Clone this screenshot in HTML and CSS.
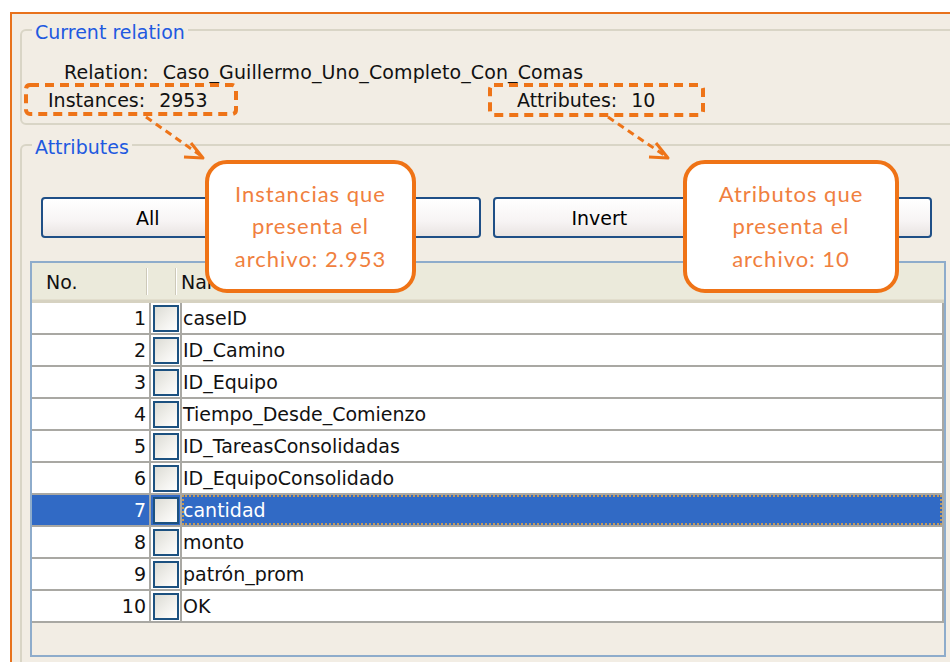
FILE: index.html
```html
<!DOCTYPE html>
<html lang="en">
<head>
<meta charset="utf-8">
<title>Preprocess - Current relation</title>
<link rel="stylesheet" href="styles.css">
</head>
<body>
<div class="frame">
  <fieldset class="group relation">
    <legend>Current relation</legend>
    <div class="rel-line"><span class="lbl">Relation:</span>Caso_Guillermo_Uno_Completo_Con_Comas</div>
    <div class="stats">
      <span class="inst"><span class="lbl">Instances:</span>2953</span>
      <span class="attrs"><span class="lbl">Attributes:</span>10</span>
    </div>
  </fieldset>

  <fieldset class="group attributes">
    <legend>Attributes</legend>
    <div class="buttons">
      <button class="btn">All</button>
      <button class="btn">None</button>
      <button class="btn">Invert</button>
      <button class="btn">Pattern</button>
    </div>
    <div class="table">
      <div class="thead">
        <div class="h-no">No.</div>
        <div class="h-chk"></div>
        <div class="h-name">Name</div>
      </div>
      <div class="tbody">
        <div class="row"><div class="c-no">1</div><div class="c-chk"><span class="box"></span></div><div class="c-name">caseID</div></div>
        <div class="row"><div class="c-no">2</div><div class="c-chk"><span class="box"></span></div><div class="c-name">ID_Camino</div></div>
        <div class="row"><div class="c-no">3</div><div class="c-chk"><span class="box"></span></div><div class="c-name">ID_Equipo</div></div>
        <div class="row"><div class="c-no">4</div><div class="c-chk"><span class="box"></span></div><div class="c-name">Tiempo_Desde_Comienzo</div></div>
        <div class="row"><div class="c-no">5</div><div class="c-chk"><span class="box"></span></div><div class="c-name">ID_TareasConsolidadas</div></div>
        <div class="row"><div class="c-no">6</div><div class="c-chk"><span class="box"></span></div><div class="c-name">ID_EquipoConsolidado</div></div>
        <div class="row sel"><div class="c-no">7</div><div class="c-chk"><span class="box"></span></div><div class="c-name">cantidad</div></div>
        <div class="row"><div class="c-no">8</div><div class="c-chk"><span class="box"></span></div><div class="c-name">monto</div></div>
        <div class="row"><div class="c-no">9</div><div class="c-chk"><span class="box"></span></div><div class="c-name">patrón_prom</div></div>
        <div class="row"><div class="c-no">10</div><div class="c-chk"><span class="box"></span></div><div class="c-name">OK</div></div>
      </div>
    </div>
  </fieldset>
</div>

<div class="callout callout-inst">
  <span>Instancias que</span>
  <span>presenta el</span>
  <span>archivo: 2.953</span>
</div>
<div class="callout callout-attr">
  <span>Atributos que</span>
  <span>presenta el</span>
  <span>archivo: 10</span>
</div>

<svg class="marks" width="950" height="662" viewBox="0 0 950 662" aria-hidden="true">
  <g fill="none" stroke="#ee7418" stroke-linecap="butt" stroke-linejoin="round">
    <rect x="26" y="85" width="210" height="29" rx="4" stroke-width="4" stroke-dasharray="9 6"/>
    <rect x="490" y="85" width="213" height="30" rx="4" stroke-width="4" stroke-dasharray="9 6"/>
    <path d="M146 117 L200 155" stroke-width="3" stroke-dasharray="7 5"/>
    <polyline points="191,143 203,158 184,157" stroke-width="3"/>
    <path d="M608 117 L664 155" stroke-width="3" stroke-dasharray="7 5"/>
    <polyline points="656,143 668,158 649,157" stroke-width="3"/>
  </g>
</svg>
</body>
</html>
```

FILE: styles.css
```css
html, body {
  margin: 0;
  padding: 0;
  background: #ffffff;
  overflow: hidden;
}

body {
  width: 950px;
  height: 662px;
  position: relative;
  font-family: "DejaVu Sans", "Liberation Sans", sans-serif;
  font-size: 19px;
  color: #111;
}

/* orange outline around the panel */
.frame {
  margin: 12px 0 0 10px;
  width: 960px;
  height: 660px;
  box-sizing: border-box;
  padding: 4px 0 0 8px;
  border-top: 2px solid #e8721c;
  border-left: 2px solid #e8721c;
  background: #f2ede4;
}

/* group boxes */
.group {
  margin: 0;
  padding: 0;
  min-width: 0;
  width: 940px;
  box-sizing: border-box;
  border: 2px solid #d9d5c6;
  border-radius: 6px;
}

.group legend {
  margin-left: 10px;
  padding: 4px 3px 0;
  color: #2159e0;
  font-size: 19px;
  line-height: 20px;
}

.relation {
  padding-bottom: 13px;
}

.rel-line {
  margin-top: 20px;
  padding-left: 42px;
  line-height: 20px;
  letter-spacing: 0.1px;
}

.lbl {
  margin-right: 14px;
}

.stats {
  display: flex;
  margin-top: 8px;
  padding-left: 26px;
  line-height: 20px;
}

.inst {
  width: 469px;
}

.attributes {
  margin-top: 8px;
  height: 560px;
}

/* All / None / Invert / Pattern */
.buttons {
  display: flex;
  gap: 12px;
  margin: 40px 0 0 19px;
  width: 891px;
}

.btn {
  flex: 1;
  height: 41px;
  border: 2px solid #1f4f86;
  border-radius: 4px;
  background: linear-gradient(#ffffff 0%, #f7f4f4 60%, #e9e4e2 100%);
  font-family: "DejaVu Sans", "Liberation Sans", sans-serif;
  font-size: 19px;
  color: #000;
  padding: 0;
}

/* attribute list */
.table {
  margin: 23px 0 0 8px;
  width: 916px;
  height: 396px;
  box-sizing: border-box;
  border: 2px solid #8eaccb;
  display: flex;
  flex-direction: column;
}

.thead {
  display: flex;
  height: 40px;
  box-sizing: border-box;
  background: #ebeadb;
  border-bottom: 3px solid #d6d2c1;
  box-shadow: inset 0 -1px 0 #e2decd;
}

.thead > div {
  margin: 5px 0;
  line-height: 28px;
}

.h-no {
  width: 115px;
  box-sizing: border-box;
  padding-left: 14px;
  border-right: 1px solid #cdc9b9;
  box-shadow: 1px 0 0 #ffffff;
}

.h-chk {
  width: 29px;
  box-sizing: border-box;
  border-right: 1px solid #cdc9b9;
  box-shadow: 1px 0 0 #ffffff;
}

.h-name {
  flex: 1;
  padding-left: 5px;
}

.tbody {
  flex: 1;
}

.row {
  display: flex;
  height: 32px;
  box-sizing: border-box;
  background: #ffffff;
  border-bottom: 2px solid #a9a8a3;
  border-right: 2px solid #a9a8a3;
  line-height: 30px;
}

.c-no {
  width: 119px;
  box-sizing: border-box;
  text-align: right;
  padding-right: 3px;
  border-right: 2px solid #a9a8a3;
}

.c-chk {
  width: 31px;
  box-sizing: border-box;
  border-right: 2px solid #a9a8a3;
  padding: 2px 0 0 2px;
}

.box {
  display: block;
  width: 26px;
  height: 27px;
  box-sizing: border-box;
  border: 2px solid #1c5180;
  background: linear-gradient(135deg, #dcdcd5 0%, #f1f0ec 55%, #ffffff 100%);
}

.c-name {
  flex: 1;
  padding-left: 1px;
}

.row.sel {
  background: #316ac5;
  color: #ffffff;
}

.row.sel .c-name {
  outline: 2px dotted #c29a5c;
  outline-offset: -2px;
}

/* speech-box notes laid over the panel */
.callout {
  position: absolute;
  top: 160px;
  height: 133px;
  box-sizing: border-box;
  border: 4px solid #ef7316;
  border-radius: 22px;
  background: #ffffff;
  display: flex;
  flex-direction: column;
  align-items: center;
  justify-content: center;
  font-family: Lato, "Open Sans", sans-serif;
  font-size: 22px;
  letter-spacing: 1px;
  line-height: 32.5px;
  color: #f0803e;
}

.callout-inst {
  left: 205px;
  width: 211px;
}

.callout-attr {
  left: 683px;
  width: 216px;
}

.marks {
  position: absolute;
  left: 0;
  top: 0;
  pointer-events: none;
}
```
